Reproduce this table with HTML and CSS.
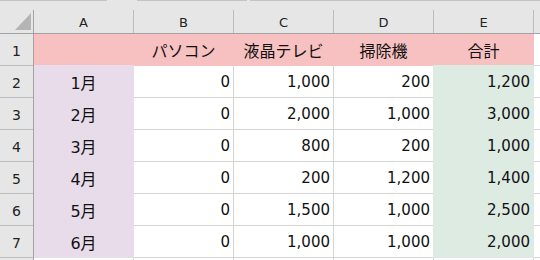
FILE: index.html
```html
<!DOCTYPE html>
<html lang="ja">
<head>
    <meta charset="UTF-8">
    <title>売上表</title>
    <link rel="stylesheet" href="styles.css">
</head>
<body>
    <!-- 数式バーの下端 -->
    <div class="top-strip">
        <span class="seg seg-1"></span>
        <span class="seg seg-2"></span>
        <span class="seg seg-3"></span>
    </div>

    <div class="sheet">
        <div class="corner">
            <svg width="33" height="23" viewBox="0 0 33 23">
                <polygon points="15,20 31,20 31,3" fill="#b4b4b4" />
            </svg>
        </div>

        <div class="col-heads">
            <div>A</div>
            <div>B</div>
            <div>C</div>
            <div>D</div>
            <div>E</div>
            <div></div>
        </div>

        <div class="row-heads">
            <div>1</div>
            <div>2</div>
            <div>3</div>
            <div>4</div>
            <div>5</div>
            <div>6</div>
            <div>7</div>
            <div></div>
        </div>

        <div class="cells" id="cells"></div>
    </div>

    <script>
        // 月別の売上データ
        const items = ['パソコン', '液晶テレビ', '掃除機'];
        const rows = [
            ['1月', 0, 1000, 200],
            ['2月', 0, 2000, 1000],
            ['3月', 0, 800, 200],
            ['4月', 0, 200, 1200],
            ['5月', 0, 1500, 1000],
            ['6月', 0, 1000, 1000]
        ];

        const cells = document.getElementById('cells');

        function addCell(text, cls) {
            const div = document.createElement('div');
            div.className = 'cell ' + cls;
            div.textContent = text;
            cells.appendChild(div);
        }

        // 見出し行
        addCell('', 'head');
        items.forEach(name => addCell(name, 'head ja'));
        addCell('合計', 'head ja');
        addCell('', 'blank');

        // データ行
        rows.forEach(r => {
            addCell(r[0], 'month');
            let total = 0;
            for (let i = 1; i < r.length; i++) {
                total += r[i];
                addCell(r[i].toLocaleString('en-US'), 'num');
            }
            addCell(total.toLocaleString('en-US'), 'num total');
            addCell('', 'blank');
        });

        // 8行目（見切れ）
        for (let i = 0; i < 6; i++) {
            addCell('', 'blank');
        }
    </script>
</body>
</html>
```

FILE: styles.css
```css
body, html {
    margin: 0;
    width: 540px;
    height: 260px;
    overflow: hidden;
    background-color: #fff;
    font-family: "DejaVu Sans", "Noto Sans CJK JP", sans-serif;
}

.top-strip {
    height: 10px;
    display: flex;
    background-color: #e6e6e6;
}

.top-strip .seg {
    height: 1px;
    background-color: #c4c4c4;
}

.seg-1 { width: 107px; margin-right: 30px; }
.seg-2 { width: 110px; margin-right: 3px; }
.seg-3 { flex: 1; }

.sheet {
    display: grid;
    grid-template-columns: 33px 1fr;
    grid-template-rows: 23px 226px;
    gap: 1px;
    background-color: #a3a3a3;
}

.corner {
    background-color: #e6e6e6;
}

.corner svg {
    display: block;
}

.col-heads {
    display: grid;
    grid-template-columns: repeat(5, 99px) 1fr;
    gap: 1px;
    background-color: #bcbcbc;
}

.col-heads div {
    background-color: #e6e6e6;
    display: flex;
    align-items: center;
    justify-content: center;
    font-size: 13px;
    color: #222;
    padding-top: 1px;
}

.row-heads {
    display: grid;
    grid-template-rows: repeat(7, 31px) 1fr;
    gap: 1px;
    background-color: #bcbcbc;
}

.row-heads div {
    background-color: #e6e6e6;
    display: flex;
    align-items: center;
    justify-content: center;
    font-size: 14px;
    color: #222;
    padding-top: 2px;
}

.cells {
    display: grid;
    grid-template-columns: repeat(5, 99px) 1fr;
    grid-template-rows: repeat(7, 31px) 1fr;
    gap: 1px;
    background-color: #d4d4d4;
    overflow: hidden;
}

.cell {
    background-color: #fff;
    display: flex;
    align-items: center;
    font-size: 15px;
    color: #111;
    white-space: nowrap;
}

/* 塗りつぶしたセルは周りの枠線も隠す */
.head {
    background-color: #f8c1c1;
    box-shadow: 0 0 0 1px #f8c1c1;
    justify-content: center;
}

.ja {
    font-size: 16px;
}

.month {
    background-color: #e8dcea;
    box-shadow: 0 0 0 1px #e8dcea;
    justify-content: center;
    font-size: 16px;
}

.num {
    justify-content: flex-end;
    padding-right: 3px;
}

.total {
    background-color: #deebe3;
    box-shadow: 0 0 0 1px #deebe3;
}
```
